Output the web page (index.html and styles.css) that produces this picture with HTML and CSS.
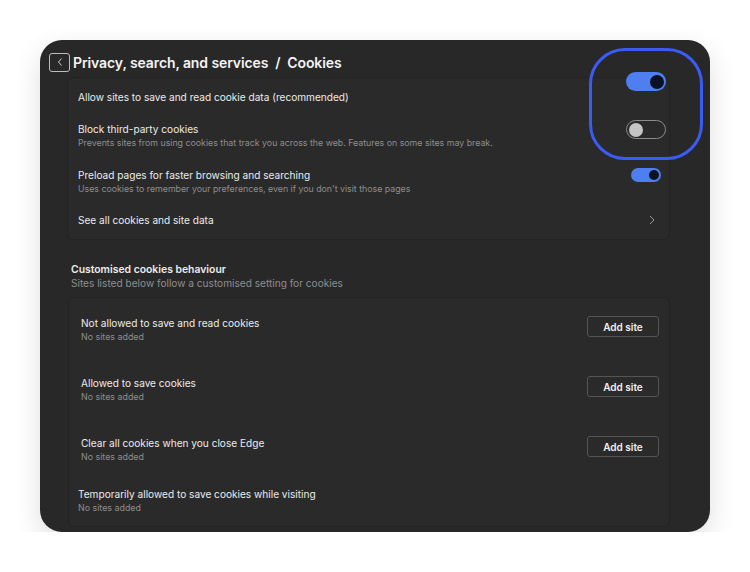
FILE: index.html
```html
<!DOCTYPE html>
<html lang="en">
<head>
    <meta charset="UTF-8">
    <title>Cookies</title>
    <link rel="stylesheet" href="styles.css">
</head>
<body>
    <div class="window">
        <div class="header">
            <span class="back-button">
                <svg width="8" height="10" viewBox="0 0 8 10"><path d="M5.5 1.5 L2.5 5 L5.5 8.5" fill="none" stroke="#cfcfcf" stroke-width="1"/></svg>
            </span>
            <span class="title">Privacy, search, and services &nbsp;/&nbsp; Cookies</span>
        </div>

        <div class="card">
            <div class="row row-first">
                <div class="row-text">
                    <div class="row-title">Allow sites to save and read cookie data (recommended)</div>
                </div>
            </div>
            <div class="row row-double">
                <div class="row-text">
                    <div class="row-title">Block third-party cookies</div>
                    <div class="row-sub">Prevents sites from using cookies that track you across the web. Features on some sites may break.</div>
                </div>
            </div>
            <div class="row row-double">
                <div class="row-text">
                    <div class="row-title">Preload pages for faster browsing and searching</div>
                    <div class="row-sub">Uses cookies to remember your preferences, even if you don't visit those pages</div>
                </div>
                <span class="toggle toggle-small on"><span class="knob"></span></span>
            </div>
            <div class="row row-link">
                <div class="row-text">
                    <div class="row-title">See all cookies and site data</div>
                </div>
                <svg class="chevron" width="8" height="10" viewBox="0 0 8 10"><path d="M2 1 L6 5 L2 9" fill="none" stroke="#9a9a9a" stroke-width="1"/></svg>
            </div>
        </div>

        <div class="section">
            <div class="section-title">Customised cookies behaviour</div>
            <div class="section-sub">Sites listed below follow a customised setting for cookies</div>
        </div>

        <div class="card card-sites">
            <div class="site-row">
                <div class="row-text">
                    <div class="row-title">Not allowed to save and read cookies</div>
                    <div class="site-sub">No sites added</div>
                </div>
                <button class="add-button">Add site</button>
            </div>
            <div class="site-row">
                <div class="row-text">
                    <div class="row-title">Allowed to save cookies</div>
                    <div class="site-sub">No sites added</div>
                </div>
                <button class="add-button">Add site</button>
            </div>
            <div class="site-row">
                <div class="row-text">
                    <div class="row-title">Clear all cookies when you close Edge</div>
                    <div class="site-sub">No sites added</div>
                </div>
                <button class="add-button">Add site</button>
            </div>
            <div class="site-row site-row-last">
                <div class="row-text">
                    <div class="row-title">Temporarily allowed to save cookies while visiting</div>
                    <div class="site-sub">No sites added</div>
                </div>
            </div>
        </div>

        <!-- highlighted toggles -->
        <div class="highlight">
            <span class="toggle toggle-big on first"><span class="knob"></span></span>
            <span class="toggle toggle-big off second"><span class="knob"></span></span>
        </div>
    </div>
</body>
</html>
```

FILE: styles.css
```css
body {
    margin: 0;
    background-color: #ffffff;
    font-family: Inter, "Open Sans", Arial, sans-serif;
    color: #ececec;
}

.window {
    position: relative;
    margin: 40px 0 0 40px;
    width: 670px;
    height: 492px;
    background-color: #282828;
    border-radius: 22px;
    box-shadow: 0 10px 28px rgba(0, 0, 0, 0.13);
    overflow: hidden;
}

.header {
    display: flex;
    align-items: center;
    padding: 13px 0 0 9px;
    height: 18px;
    margin-bottom: 6px;
}

.back-button {
    display: flex;
    align-items: center;
    justify-content: center;
    width: 19px;
    height: 17px;
    border: 1px solid #bdbdbd;
    border-radius: 3px;
    margin-right: 3px;
}

.title {
    font-size: 14px;
    font-weight: 600;
    color: #f4f4f4;
    letter-spacing: -0.1px;
}

.card {
    margin-left: 27px;
    width: 603px;
    background-color: #2a2a2a;
    border: 1px solid #232323;
    border-radius: 6px;
    box-sizing: border-box;
    padding: 0 8px 0 10px;
}

.row {
    display: flex;
    align-items: flex-start;
    justify-content: space-between;
    box-sizing: border-box;
}

.row-first {
    height: 38px;
    padding-top: 12px;
}

.row-double {
    height: 46px;
    padding-top: 6px;
}

.row-link {
    height: 31px;
    padding-top: 5px;
}

.row-title {
    font-size: 10.1px;
    line-height: 14px;
    color: #ececec;
}

.row-sub {
    font-size: 8.8px;
    line-height: 12px;
    margin-top: 1px;
    color: #8e8e8e;
}

.chevron {
    margin: 2px 5px 0 0;
}

.toggle {
    display: inline-flex;
    align-items: center;
    box-sizing: border-box;
    border-radius: 20px;
}

.toggle.on {
    background-color: #4f7ef0;
    justify-content: flex-end;
}

.toggle.off {
    border: 1px solid #8a8a8a;
    justify-content: flex-start;
}

.toggle-small {
    width: 30px;
    height: 14px;
    padding: 0 2px;
}

.toggle-small .knob {
    width: 10px;
    height: 10px;
    border-radius: 50%;
    background-color: #0b1222;
}

.toggle-big {
    width: 40px;
    height: 19px;
    padding: 0 2px;
}

.toggle-big .knob {
    width: 14px;
    height: 14px;
    border-radius: 50%;
}

.toggle-big.on .knob {
    background-color: #0a1122;
}

.toggle-big.off .knob {
    background-color: #c4c4c4;
}

.section {
    margin: 23px 0 8px 31px;
}

.section-title {
    font-size: 10.4px;
    font-weight: 600;
    line-height: 14px;
    color: #ececec;
}

.section-sub {
    font-size: 10.1px;
    line-height: 12px;
    color: #8e8e8e;
}

.card-sites {
    margin-left: 28px;
    width: 602px;
    padding: 0 11px 0 12px;
}

.site-row {
    display: flex;
    justify-content: space-between;
    align-items: flex-start;
    height: 60px;
    padding-top: 18px;
    box-sizing: border-box;
}

.site-row-last {
    height: 48px;
    padding-top: 9px;
    margin-left: -3px;
}

.site-sub {
    font-size: 8.9px;
    line-height: 12px;
    margin-top: 1px;
    color: #8e8e8e;
}

.add-button {
    width: 72px;
    height: 21px;
    margin: 0 -1px 0 0;
    background-color: transparent;
    border: 1px solid #555555;
    border-radius: 3px;
    color: #f0f0f0;
    font-family: inherit;
    font-size: 10px;
    font-weight: 600;
    cursor: pointer;
}

.highlight {
    position: absolute;
    left: 549px;
    top: 8px;
    width: 114px;
    height: 112px;
    box-sizing: border-box;
    border: 3px solid #3b5cf4;
    border-radius: 36px;
}

.highlight .toggle {
    position: absolute;
    left: 34px;
}

.highlight .first {
    top: 21px;
}

.highlight .second {
    top: 69px;
}
```
